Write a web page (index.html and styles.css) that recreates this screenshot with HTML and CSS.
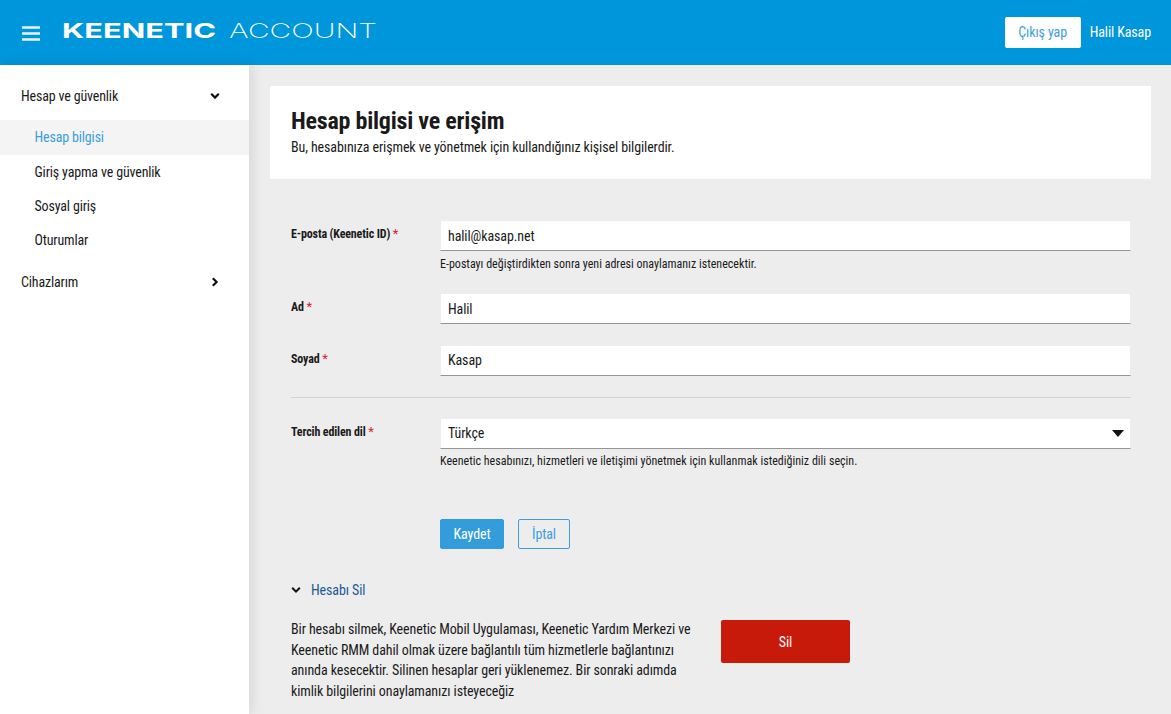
FILE: index.html
```html
<!DOCTYPE html>
<html lang="tr">
<head>
<meta charset="utf-8">
<title>Keenetic Account</title>
<link rel="stylesheet" href="styles.css">
</head>
<body>
<header class="topbar">
  <div class="brand">
    <svg class="burger" width="18" height="15" viewBox="0 0 18 15"><path d="M0 1.500h18M0 7.500h18M0 13.500h18" stroke="#e9f5fb" stroke-width="2.600"/></svg>
    <svg class="logo" width="316" height="24" viewBox="0 0 316 24">
      <text class="logo-bold" x="0" y="18" textLength="154" lengthAdjust="spacingAndGlyphs">KEENETIC</text>
      <text class="logo-thin" x="167" y="18" textLength="148" lengthAdjust="spacingAndGlyphs">ACCOUNT</text>
    </svg>
  </div>
  <div class="user">
    <button class="logout">Çıkış yap</button>
    <span class="username">Halil Kasap</span>
  </div>
</header>
<div class="shell">
  <nav class="sidebar">
    <div class="nav-group">
      <span>Hesap ve güvenlik</span>
      <svg width="10" height="8" viewBox="0 0 10 8"><path d="M1.200 1.800 5 5.600l3.800-3.800" fill="none" stroke="#111" stroke-width="2.200"/></svg>
    </div>
    <a class="nav-item active">Hesap bilgisi</a>
    <a class="nav-item">Giriş yapma ve güvenlik</a>
    <a class="nav-item">Sosyal giriş</a>
    <a class="nav-item">Oturumlar</a>
    <div class="nav-group second">
      <span>Cihazlarım</span>
      <svg width="10" height="10" viewBox="0 0 10 10"><path d="M2.800 1.200 6.600 5 2.800 8.800" fill="none" stroke="#111" stroke-width="2.200"/></svg>
    </div>
  </nav>
  <main class="content">
    <section class="card">
      <h1>Hesap bilgisi ve erişim</h1>
      <p>Bu, hesabınıza erişmek ve yönetmek için kullandığınız kişisel bilgilerdir.</p>
    </section>
    <form class="form">
      <div class="row row-email">
        <label>E-posta (Keenetic ID) <em>*</em></label>
        <div class="field">
          <div class="input low">halil@kasap.net</div>
          <small>E-postayı değiştirdikten sonra yeni adresi onaylamanız istenecektir.</small>
        </div>
      </div>
      <div class="row row-name">
        <label>Ad <em>*</em></label>
        <div class="field"><div class="input low">Halil</div></div>
      </div>
      <div class="row row-surname">
        <label>Soyad <em>*</em></label>
        <div class="field"><div class="input">Kasap</div></div>
      </div>
      <hr class="divider">
      <div class="row">
        <label>Tercih edilen dil <em>*</em></label>
        <div class="field">
          <div class="input select">
            <span>Türkçe</span>
            <svg width="12" height="7" viewBox="0 0 12 7"><path d="M0 0h12L6 7z" fill="#111"/></svg>
          </div>
          <small class="tight">Keenetic hesabınızı, hizmetleri ve iletişimi yönetmek için kullanmak istediğiniz dili seçin.</small>
        </div>
      </div>
      <div class="actions">
        <button type="button" class="btn primary">Kaydet</button>
        <button type="button" class="btn outline">İptal</button>
      </div>
    </form>
    <section class="danger">
      <div class="danger-head">
        <svg width="10" height="8" viewBox="0 0 10 8"><path d="M1.200 1.800 5 5.600l3.800-3.800" fill="none" stroke="#111" stroke-width="2"/></svg>
        <span>Hesabı Sil</span>
      </div>
      <div class="danger-body">
        <p>Bir hesabı silmek, Keenetic Mobil Uygulaması, Keenetic Yardım Merkezi ve Keenetic RMM dahil olmak üzere bağlantılı tüm hizmetlerle bağlantınızı anında kesecektir. Silinen hesaplar geri yüklenemez. Bir sonraki adımda kimlik bilgilerini onaylamanızı isteyeceğiz</p>
        <button type="button" class="btn delete">Sil</button>
      </div>
    </section>
  </main>
</div>
</body>
</html>
```
FILE: styles.css
```css
* { box-sizing: border-box; }
html, body { margin: 0; height: 100%; overflow: hidden; }
body {
  font-family: "Roboto", "Liberation Sans", sans-serif;
  font-stretch: 75%;
  font-size: 14px;
  letter-spacing: -.11px;
  color: #1a1a1a;
  background: #ededed;
}
button { font: inherit; font-stretch: 75%; letter-spacing: inherit; cursor: pointer; }

.topbar {
  height: 65px;
  background: #0096dc;
  display: flex;
  align-items: center;
  justify-content: space-between;
  padding: 0 20px 0 22px;
}
.brand { display: flex; align-items: center; gap: 23px; }
.burger { margin-top: 2px; }
.logo { margin-top: -2px; margin-left: -1px; }
.logo-bold { font-family: "Inter", sans-serif; font-weight: 700; font-size: 20px; fill: #fff; font-stretch: normal; letter-spacing: 0; }
.logo-thin { font-family: "Inter", sans-serif; font-weight: 200; font-size: 20px; fill: #fff; font-stretch: normal; letter-spacing: 0; }
.user { display: flex; align-items: flex-start; gap: 9px; }
.logout {
  width: 76px;
  height: 31px;
  background: #fff;
  color: #3d9fdc;
  border: 0;
  border-radius: 2px;
  padding: 0 0 2px;
}
.username { color: #fff; line-height: 31px; }

.shell { display: flex; height: 649px; }
.sidebar {
  width: 249px;
  flex: none;
  background: #fff;
  box-shadow: 3px 0 12px rgba(0, 0, 0, .1);
  padding-top: 14px;
  letter-spacing: -.16px;
}
.nav-group {
  display: flex;
  justify-content: space-between;
  align-items: center;
  height: 34px;
  padding: 0 29px 0 21px;
  margin-bottom: 7px;
}
.nav-group.second { margin-top: 8px; }
.nav-item { display: block; height: 34px; line-height: 34px; padding-left: 34.500px; }
.nav-item.active { height: 35px; background: #f4f4f4; color: #3b9fdc; }

.content { flex: 1; padding: 21px 20px 0 21px; min-width: 0; }
.card { background: #fff; height: 93px; padding: 21px 21px 0; }
.card h1 { margin: 0; font-size: 24px; line-height: 29px; font-weight: 700; letter-spacing: -.22px; color: #1a1a1a; }
.card p { margin: 2px 0 0; line-height: 19px; }

.form { padding: 42px 20px 0 21px; }
.row { display: grid; grid-template-columns: 149px 1fr; }
.row label { font-size: 12px; font-weight: 700; line-height: 16px; padding-top: 5px; letter-spacing: -.14px; }
.row em { font-style: normal; font-weight: 400; color: #d9232e; font-size: 13px; }
.input {
  height: 30px;
  background: #fff;
  background-clip: padding-box;
  border: solid transparent;
  border-width: 0 1px;
  border-bottom: 1px solid #949494;
  line-height: 28px;
  padding: 0 7px;
}
.input.low { line-height: 30px; }
.select { display: flex; justify-content: space-between; align-items: center; padding-right: 6px; padding-bottom: 1px; }
.field small { display: block; font-size: 12px; line-height: 14px; margin-top: 6px; letter-spacing: 0; }
.field small.tight { margin-top: 5px; letter-spacing: .01px; }
.row-email { margin-bottom: 23px; }
.row-name { margin-bottom: 22px; }
.divider { border: 0; border-top: 1px solid #d4d4d4; margin: 21px 0; }
.actions { display: flex; gap: 14px; padding: 51px 0 0 149px; }
.btn { height: 30px; border-radius: 2px; padding: 0; }
.primary { width: 64px; background: #339ddb; border: 1px solid #339ddb; color: #fff; }
.outline { width: 52px; background: transparent; border: 1px solid #3d9fdc; color: #3d9fdc; }

.danger { padding: 31px 0 0 21px; }
.danger-head { display: flex; align-items: center; gap: 10px; color: #215a94; height: 20px; }
.danger-body { display: flex; align-items: flex-start; gap: 25px; margin-top: 20px; }
.danger-body p { margin: -1px 0 0; width: 405px; line-height: 20.500px; }
.delete { width: 129px; height: 43px; background: #c81a0b; color: #fff; border: 0; }
```
